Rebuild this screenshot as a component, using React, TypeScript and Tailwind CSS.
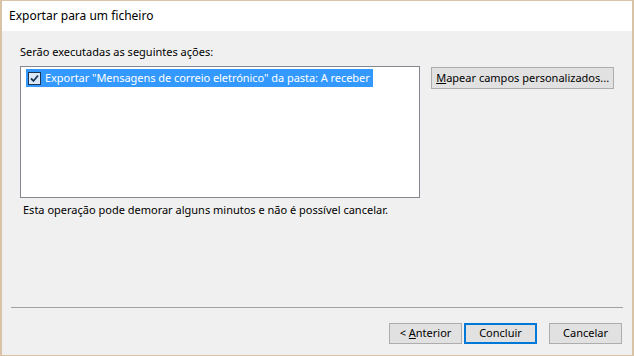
// Export wizard — final step ("Exportar para um ficheiro")

const font = { fontFamily: '"Noto Sans", "Segoe UI", sans-serif' };

function CheckBox() {
  return (
    <svg width={13} height={13} viewBox="0 0 13 13" className="shrink-0" aria-hidden="true">
      <rect x="0.5" y="0.5" width="12" height="12" fill="#dceaf8" stroke="#1c3557" />
      <path d="M3 6.5 L5.5 9 L10 3.5" fill="none" stroke="#1c3557" strokeWidth="1.8" />
    </svg>
  );
}

function Btn({ children, focused = false, className = '' }: { children: React.ReactNode; focused?: boolean; className?: string }) {
  return (
    <button
      className={`flex items-center justify-center whitespace-nowrap bg-[#e1e1e1] text-[11px] text-black ${
        focused ? 'border-2 border-[#0078d7]' : 'border border-[#adadad]'
      } ${className}`}
      style={font}
    >
      {children}
    </button>
  );
}

export default function App() {
  return (
    <div
      className="flex h-[356px] w-[634px] flex-col whitespace-nowrap border-x-2 border-y border-[#d9c3a6] bg-[#f0f0f0] text-[11px] text-black"
      style={font}
    >
      {/* Header */}
      <div className="flex h-[30px] items-center bg-white pl-[7px] pb-[1px] text-[12px]">Exportar para um ficheiro</div>

      {/* Body */}
      <div className="flex flex-1 flex-col pl-[18px] pr-[18px]">
        <div className="mt-[11px] h-[20px] leading-[20px]">Serão executadas as seguintes ações:</div>
        <div className="mt-[4px] flex gap-[11px]">
          <div className="h-[132px] w-[401px] border border-[#828790] bg-white pl-[5px] pt-[2px]">
            <div className="flex h-[18px] w-fit items-center gap-[4px] bg-[#3399ff] pl-[2px] pr-[3px] text-white">
              <CheckBox />
              <span className="tracking-[-0.05px]">Exportar "Mensagens de correio eletrónico" da pasta: A receber</span>
            </div>
          </div>
          <Btn className="mt-[1px] h-[22px] w-[183px]">
            <span>
              <u>M</u>apear campos personalizados...
            </span>
          </Btn>
        </div>
        <div className="ml-[3px] mt-[3px] leading-[18px]">
          Esta operação pode demorar alguns minutos e não é possível cancelar.
        </div>
      </div>

      {/* Separator */}
      <div className="mx-[9px] h-[2px] border-t border-[#a0a0a0] border-b-white" />

      {/* Footer buttons */}
      <div className="flex h-[46px] items-start justify-end gap-[2px] pr-[10px] pt-[14px]">
        <Btn className="h-[21px] w-[73px]">
          <span>
            &lt; <u>A</u>nterior
          </span>
        </Btn>
        <Btn focused className="h-[21px] w-[73px]">
          Concluir
        </Btn>
        <Btn className="ml-[10px] h-[21px] w-[73px]">Cancelar</Btn>
      </div>
    </div>
  );
}
